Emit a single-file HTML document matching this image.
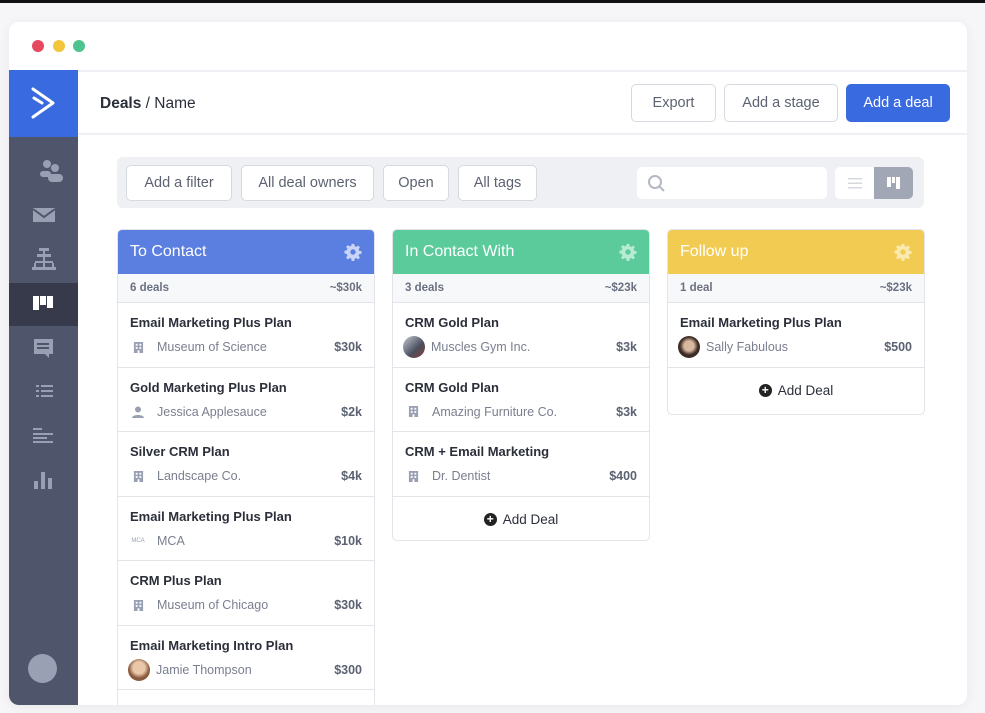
<!DOCTYPE html>
<html><head><meta charset="utf-8"><style>
*{box-sizing:border-box;margin:0;padding:0}
html,body{width:985px;height:713px;overflow:hidden}
body{background:#f6f6f8;font-family:"Liberation Sans",sans-serif;position:relative;color:#2b2f3a}
.abs{position:absolute}
.topbar{left:0;top:0;width:985px;height:3px;background:#111}
.win{left:9px;top:22px;width:958px;height:683px;background:#fff;border-radius:10px;box-shadow:0 2px 12px rgba(0,0,0,.06);overflow:hidden}
.dot{width:12px;height:12px;border-radius:50%;top:40px}
.side{left:9px;top:70px;width:69px;height:635px;background:#4f566b;border-bottom-left-radius:10px}
.logo{left:9px;top:70px;width:69px;height:67px;background:#3a6ae0}
.act{left:9px;top:283px;width:69px;height:43px;background:#363a4a}
.hdr{left:78px;top:70px;width:889px;height:65px;border-top:2px solid #eef0f4;border-bottom:2px solid #eef0f4;background:#fff}
.btn{height:38px;border:1.5px solid #d6d9e0;border-radius:5px;background:#fff;color:#5c6271;font-size:14.5px;display:flex;align-items:center;justify-content:center}
.fbar{left:117px;top:157px;width:807px;height:51px;background:#eef0f4;border-radius:6px}
.fb{top:165px;height:36px;border:1.5px solid #d6d9e0;border-radius:5px;background:#fff;color:#5c6271;font-size:14.5px;display:flex;align-items:center;justify-content:center}
.col{border:1.5px solid #e2e4ea;border-radius:5px;background:#fff;overflow:hidden}
.ch{height:44px;color:#fff;font-size:16px;padding:13px 12px;position:relative}
.gear{position:absolute;right:12px;top:13px;width:18px;height:18px}
.sum{height:29px;background:#f7f8fa;border-bottom:1.5px solid #e2e4ea;font-size:11.5px;color:#6b7080;display:flex;justify-content:space-between;align-items:center;padding:0 12px;font-weight:bold}
.card{height:64.5px;border-bottom:1.5px solid #e2e4ea;padding:12px 12px 0 12px;position:relative}
.t{font-size:13px;font-weight:bold;color:#2b2f3a}
.s{position:absolute;left:12px;top:34px;right:12px;height:20px;display:flex;align-items:center;font-size:12.5px;color:#7a7f8f}
.s .v{margin-left:auto;font-weight:bold;color:#5c6271;font-size:12.5px}
.ic{width:16px;height:16px;margin-right:11px;display:flex;align-items:center;justify-content:center;font-size:6px;color:#9aa0b3}
.av{width:22px;height:22px;border-radius:50%;margin-right:6px;margin-left:-2px}
.add{height:46px;display:flex;align-items:center;justify-content:center;font-size:13.5px;color:#2b2f3a}
.plus{width:13px;height:13px;border-radius:50%;background:#222;color:#fff;font-size:12px;line-height:13px;text-align:center;margin-right:6px;font-weight:bold}
</style></head><body>
<svg width="0" height="0" style="position:absolute;left:0;top:0"><defs><symbol id="bld" viewBox="0 0 12 12"><path fill="#9aa0b3" d="M1 0h10v12H7V9H5v3H1z"/><rect x="3" y="2" width="2" height="2" fill="#fff"/><rect x="7" y="2" width="2" height="2" fill="#fff"/><rect x="3" y="5.5" width="2" height="2" fill="#fff"/><rect x="7" y="5.5" width="2" height="2" fill="#fff"/></symbol></defs></svg>
<div class="abs topbar"></div>
<div class="abs win"></div>
<div class="abs dot" style="left:32px;background:#e5485f"></div>
<div class="abs dot" style="left:53px;background:#f2c63b"></div>
<div class="abs dot" style="left:73px;background:#4fc38f"></div>
<div class="abs side"></div>
<div class="abs logo"><svg width="69" height="67"><path d="M24 19 L44 33 L24 47" fill="none" stroke="#fff" stroke-width="3" stroke-linecap="round" stroke-linejoin="round"/><path d="M25 28 L33 33" stroke="#fff" stroke-width="3" stroke-linecap="round"/></svg></div>
<div class="abs act"></div>
<svg class="abs" style="left:9px;top:150px" width="69" height="350" fill="#9aa0b3">
<circle cx="38" cy="14" r="4"/><circle cx="46" cy="18" r="4"/><rect x="31" y="21" width="11" height="6" rx="3"/><rect x="39" y="24" width="15" height="8" rx="4"/>
<path d="M24 58h22v14h-22z"/><path d="M24 59l11 8l11-8" stroke="#4f566b" stroke-width="2" fill="none"/>
<rect x="30" y="98" width="10" height="3"/><rect x="28" y="104" width="14" height="3"/><rect x="34" y="101" width="2" height="10"/><rect x="26" y="111" width="18" height="2"/><rect x="25" y="113" width="2" height="5"/><rect x="43" y="113" width="2" height="5"/><rect x="34" y="113" width="2" height="5"/><rect x="23" y="117" width="24" height="3"/>
<rect x="24" y="146" width="6" height="14" fill="#fff"/><rect x="31" y="146" width="6" height="9" fill="#fff"/><rect x="38" y="146" width="6" height="12" fill="#fff"/>
<path d="M25 189h19v15h-4v4l-4-4h-11z"/><rect x="28" y="193" width="12" height="2" fill="#4f566b"/><rect x="28" y="197" width="12" height="2" fill="#4f566b"/>
<rect x="27" y="235" width="3" height="2"/><rect x="32" y="235" width="12" height="2"/><rect x="27" y="240" width="3" height="2"/><rect x="32" y="240" width="12" height="2"/><rect x="27" y="245" width="3" height="2"/><rect x="32" y="245" width="12" height="2"/>
<rect x="24" y="278" width="9" height="2"/><rect x="24" y="283" width="20" height="2"/><rect x="24" y="287" width="14" height="2"/><rect x="24" y="291" width="20" height="2"/>
<rect x="25" y="331" width="4" height="8"/><rect x="32" y="322" width="4" height="17"/><rect x="39" y="328" width="4" height="11"/>
</svg>
<div class="abs" style="left:28px;top:654px;width:29px;height:29px;border-radius:50%;background:#9aa0b3"></div>
<div class="abs hdr"></div>
<div class="abs" style="left:100px;top:95px;font-size:15.5px;color:#2b2f3a"><span style="font-weight:bold">Deals</span> / Name</div>
<div class="abs btn" style="left:631px;top:84px;width:85px">Export</div>
<div class="abs btn" style="left:724px;top:84px;width:114px">Add a stage</div>
<div class="abs btn" style="left:846px;top:84px;width:104px;background:#3a6ae0;border-color:#3a6ae0;color:#fff">Add a deal</div>
<div class="abs fbar"></div>
<div class="abs fb" style="left:126px;width:106px">Add a filter</div>
<div class="abs fb" style="left:241px;width:133px">All deal owners</div>
<div class="abs fb" style="left:383px;width:66px">Open</div>
<div class="abs fb" style="left:458px;width:79px">All tags</div>
<div class="abs" style="left:637px;top:167px;width:190px;height:32px;background:#fff;border-radius:5px"><svg width="30" height="32"><circle cx="18" cy="15" r="6" fill="none" stroke="#b4b8c4" stroke-width="2"/><path d="M22 19l5 5" stroke="#b4b8c4" stroke-width="2"/></svg></div>
<div class="abs" style="left:835px;top:167px;width:40px;height:32px;background:#fff;border-radius:5px 0 0 5px"><svg width="40" height="32"><rect x="13" y="11" width="14" height="1.5" fill="#d5d8df"/><rect x="13" y="15.5" width="14" height="1.5" fill="#d5d8df"/><rect x="13" y="20" width="14" height="1.5" fill="#d5d8df"/></svg></div>
<div class="abs" style="left:874px;top:167px;width:39px;height:32px;background:#a2a7b5;border-radius:0 5px 5px 0"><svg width="39" height="32"><rect x="13" y="10" width="4" height="10" fill="#fff"/><rect x="18" y="10" width="3" height="6" fill="#fff"/><rect x="22" y="10" width="4" height="12" fill="#fff"/></svg></div>

<div class="abs col" style="left:117px;top:229px;width:258px;height:476px;border-bottom:none;border-radius:5px 5px 0 0">
<div class="ch" style="background:#5b7fe0">To Contact<svg class="gear" viewBox="0 0 20 20"><path fill="#c9d5f7" d="M8.6 1h2.8l.5 2.6 1.6.7 2.2-1.5 2 2-1.5 2.2.7 1.6 2.6.5v2.8l-2.6.5-.7 1.6 1.5 2.2-2 2-2.2-1.5-1.6.7-.5 2.6H8.6l-.5-2.6-1.6-.7-2.2 1.5-2-2 1.5-2.2-.7-1.6L.5 11.4V8.6l2.6-.5.7-1.6L2.3 4.3l2-2 2.2 1.5 1.6-.7zM10 7a3 3 0 100 6 3 3 0 000-6z"/></svg></div>
<div class="sum"><span>6 deals</span><span>~$30k</span></div>
<div class="card"><div class="t">Email Marketing Plus Plan</div><div class="s"><span class="ic"><svg width="11" height="11"><use href="#bld"/></svg></span>Museum of Science<span class="v">$30k</span></div></div>
<div class="card"><div class="t">Gold Marketing Plus Plan</div><div class="s"><span class="ic"><svg width="12" height="12" fill="#9aa0b3"><circle cx="6" cy="3.5" r="3"/><path d="M0 12c0-4 12-4 12 0z"/></svg></span>Jessica Applesauce<span class="v">$2k</span></div></div>
<div class="card"><div class="t">Silver CRM Plan</div><div class="s"><span class="ic"><svg width="11" height="11"><use href="#bld"/></svg></span>Landscape Co.<span class="v">$4k</span></div></div>
<div class="card"><div class="t">Email Marketing Plus Plan</div><div class="s"><span class="ic">MCA</span>MCA<span class="v">$10k</span></div></div>
<div class="card"><div class="t">CRM Plus Plan</div><div class="s"><span class="ic"><svg width="11" height="11"><use href="#bld"/></svg></span>Museum of Chicago<span class="v">$30k</span></div></div>
<div class="card"><div class="t">Email Marketing Intro Plan</div><div class="s"><span class="av" style="background:radial-gradient(circle at 50% 40%,#e9c7a8 35%,#8a5a3c 60%)"></span>Jamie Thompson<span class="v">$300</span></div></div>
</div>

<div class="abs col" style="left:392px;top:229px;width:258px;height:312px">
<div class="ch" style="background:#5ccb9b">In Contact With<svg class="gear" viewBox="0 0 20 20"><path fill="#b8ebd4" d="M8.6 1h2.8l.5 2.6 1.6.7 2.2-1.5 2 2-1.5 2.2.7 1.6 2.6.5v2.8l-2.6.5-.7 1.6 1.5 2.2-2 2-2.2-1.5-1.6.7-.5 2.6H8.6l-.5-2.6-1.6-.7-2.2 1.5-2-2 1.5-2.2-.7-1.6L.5 11.4V8.6l2.6-.5.7-1.6L2.3 4.3l2-2 2.2 1.5 1.6-.7zM10 7a3 3 0 100 6 3 3 0 000-6z"/></svg></div>
<div class="sum"><span>3 deals</span><span>~$23k</span></div>
<div class="card"><div class="t">CRM Gold Plan</div><div class="s"><span class="av" style="background:linear-gradient(135deg,#c9ccd6,#4a4f5e 60%,#8b3a3a)"></span>Muscles Gym Inc.<span class="v">$3k</span></div></div>
<div class="card"><div class="t">CRM Gold Plan</div><div class="s"><span class="ic"><svg width="11" height="11"><use href="#bld"/></svg></span>Amazing Furniture Co.<span class="v">$3k</span></div></div>
<div class="card"><div class="t">CRM + Email Marketing</div><div class="s"><span class="ic"><svg width="11" height="11"><use href="#bld"/></svg></span>Dr. Dentist<span class="v">$400</span></div></div>
<div class="add"><span class="plus">+</span>Add Deal</div>
</div>

<div class="abs col" style="left:667px;top:229px;width:258px;height:186px">
<div class="ch" style="background:#f2cc52">Follow up<svg class="gear" viewBox="0 0 20 20"><path fill="#faeab0" d="M8.6 1h2.8l.5 2.6 1.6.7 2.2-1.5 2 2-1.5 2.2.7 1.6 2.6.5v2.8l-2.6.5-.7 1.6 1.5 2.2-2 2-2.2-1.5-1.6.7-.5 2.6H8.6l-.5-2.6-1.6-.7-2.2 1.5-2-2 1.5-2.2-.7-1.6L.5 11.4V8.6l2.6-.5.7-1.6L2.3 4.3l2-2 2.2 1.5 1.6-.7zM10 7a3 3 0 100 6 3 3 0 000-6z"/></svg></div>
<div class="sum"><span>1 deal</span><span>~$23k</span></div>
<div class="card"><div class="t">Email Marketing Plus Plan</div><div class="s"><span class="av" style="background:radial-gradient(circle at 50% 45%,#d9b8a0 30%,#3d2c26 55%)"></span>Sally Fabulous<span class="v">$500</span></div></div>
<div class="add"><span class="plus">+</span>Add Deal</div>
</div>
</body></html>
